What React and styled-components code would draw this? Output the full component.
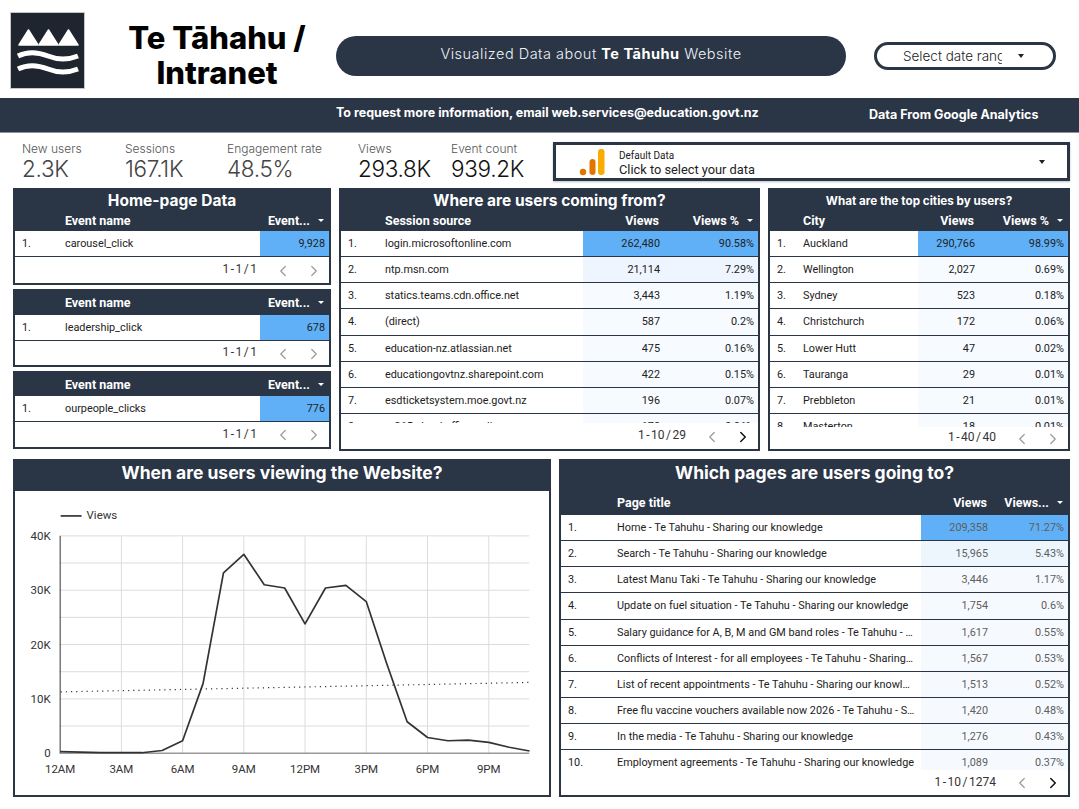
import React from "react";
import styled, { createGlobalStyle } from "styled-components";
import { ChevronLeft, ChevronRight } from "lucide-react";

const DARK = "#2a3546";
const BLUE = "#5fb0f6";
const HEAD_FONT = `Inter, "Open Sans", sans-serif`;

const GlobalStyle = createGlobalStyle`
    body {
        margin: 0;
        background: #fff;
        font-family: Roboto, "Liberation Sans", sans-serif;
        color: #222;
    }
    * { box-sizing: border-box; }
`;

// hourly views in thousands, 12AM to 11PM
const HOURLY = [0.3, 0.2, 0.1, 0.1, 0.1, 0.5, 2.3, 12.8, 33.2, 36.6, 31, 30.4, 23.8, 30.4, 30.9, 27.9, 16.5, 5.8, 2.9, 2.3, 2.4, 2, 1.1, 0.4];

const sources = [
    ["login.microsoftonline.com", "262,480", "90.58%", BLUE],
    ["ntp.msn.com", "21,114", "7.29%", "#eef5fe"],
    ["statics.teams.cdn.office.net", "3,443", "1.19%", "#f7fbff"],
    ["(direct)", "587", "0.2%", "#f7fbff"],
    ["education-nz.atlassian.net", "475", "0.16%", "#f7fbff"],
    ["educationgovtnz.sharepoint.com", "422", "0.15%", "#f7fbff"],
    ["esdticketsystem.moe.govt.nz", "196", "0.07%", "#f7fbff"],
    ["m365.cloud.office.online", "178", "0.06%", "#f7fbff"],
];

const cities = [
    ["Auckland", "290,766", "98.99%", BLUE],
    ["Wellington", "2,027", "0.69%", "#f7fbff"],
    ["Sydney", "523", "0.18%", "#f7fbff"],
    ["Christchurch", "172", "0.06%", "#f7fbff"],
    ["Lower Hutt", "47", "0.02%", "#f7fbff"],
    ["Tauranga", "29", "0.01%", "#f7fbff"],
    ["Prebbleton", "21", "0.01%", "#f7fbff"],
    ["Masterton", "18", "0.01%", "#f7fbff"],
];

const pages = [
    ["Home - Te Tahuhu - Sharing our knowledge", "209,358", "71.27%", BLUE],
    ["Search - Te Tahuhu - Sharing our knowledge", "15,965", "5.43%", "#edf6fd"],
    ["Latest Manu Taki - Te Tahuhu - Sharing our knowledge", "3,446", "1.17%", "#f6faff"],
    ["Update on fuel situation - Te Tahuhu - Sharing our knowledge", "1,754", "0.6%", "#f6faff"],
    ["Salary guidance for A, B, M and GM band roles - Te Tahuhu - Sharing our knowledge", "1,617", "0.55%", "#f6faff"],
    ["Conflicts of Interest - for all employees - Te Tahuhu - Sharing our knowledge", "1,567", "0.53%", "#f6faff"],
    ["List of recent appointments - Te Tahuhu - Sharing our knowledge", "1,513", "0.52%", "#f6faff"],
    ["Free flu vaccine vouchers available now 2026 - Te Tahuhu - Sharing our knowledge", "1,420", "0.48%", "#f6faff"],
    ["In the media - Te Tahuhu - Sharing our knowledge", "1,276", "0.43%", "#f6faff"],
    ["Employment agreements - Te Tahuhu - Sharing our knowledge", "1,089", "0.37%", "#f6faff"],
];

function Logo() {
    return (
        <svg width="75" height="77" viewBox="0 0 75 77">
            <rect x="0.5" y="0.5" width="74" height="76" fill="#1f252e" stroke="#c4c6c8" />
            <g fill="#fff" stroke="#fff" strokeWidth="1.5" strokeLinejoin="round">
                <path d="M9 33 L18.5 18 L28 33 Z" />
                <path d="M29 33 L38.5 18 L48 33 Z" />
                <path d="M49 33 L58.5 18 L68 33 Z" />
            </g>
            <g fill="none" stroke="#fff" strokeWidth="5">
                <path d="M8 44 C18 39 28 40 38 44 C48 48 58 48 68 44" />
                <path d="M8 57 C18 52 28 53 38 57 C48 61 58 61 68 57" />
            </g>
        </svg>
    );
}

function AnalyticsIcon() {
    return (
        <svg width="26" height="28" viewBox="0 0 26 28">
            <circle cx="4" cy="24" r="3.2" fill="#e37400" />
            <rect x="10.5" y="11" width="6" height="16" rx="3" fill="#e37400" />
            <rect x="19" y="1" width="6.5" height="26" rx="3" fill="#f9ab00" />
        </svg>
    );
}

function DataTable({ title, titleSize, titleHeight, titleLine, colsHeight = 19, columns, grid, rows, visible, pager, pagerNext, dim, height, plain }) {
    return (
        <Card $height={height}>
            {title && <CardTitle $size={titleSize} $h={titleHeight} $line={titleLine}>{title}</CardTitle>}
            <ColumnRow $grid={grid} $h={colsHeight}>
                <span />
                <span>{columns[0]}</span>
                {columns.slice(1).map((col, i) => (
                    <ColumnNum key={col}>
                        {col}
                        {i === columns.length - 2 && <SortArrow />}
                    </ColumnNum>
                ))}
            </ColumnRow>
            <RowClip $h={visible}>
                {rows.map((row, i) => (
                    <Row key={row[0]} $grid={grid}>
                        <span>{i + 1}.</span>
                        <Name>{row[0]}</Name>
                        {plain ? (
                            <NumCell style={{ background: row[row.length - 1] }}>{row[1]}</NumCell>
                        ) : (
                            <>
                                <NumCell $dim={dim} style={{ background: row[3] }}>{row[1]}</NumCell>
                                <NumCell $dim={dim} style={{ background: row[3] }}>{row[2]}</NumCell>
                            </>
                        )}
                    </Row>
                ))}
            </RowClip>
            <Pager>
                <PagerText>{pager}</PagerText>
                <PagerBtn>
                    <ChevronLeft size={18} color="#9a9a9a" strokeWidth={1.6} />
                </PagerBtn>
                <PagerBtn>
                    <ChevronRight size={18} color={pagerNext ? "#111" : "#9a9a9a"} strokeWidth={pagerNext ? 2 : 1.6} />
                </PagerBtn>
            </Pager>
        </Card>
    );
}

function ViewsChart() {
    const x = (h) => 59.5 + h * 20.47;
    const y = (k) => 753 - k * 5.45;
    const line = HOURLY.map((k, h) => `${x(h).toFixed(1)},${y(k).toFixed(1)}`).join(" ");
    return (
        <svg width="534" height="305" viewBox="15 490 534 305">
            {[5, 10, 15, 20, 25, 30, 35, 40].map((k) => (
                <line key={k} x1="59" x2="530" y1={y(k)} y2={y(k)} stroke="#dcdcdc" />
            ))}
            {[3, 6, 9, 12, 15, 18, 21].map((h) => (
                <line key={h} x1={x(h)} x2={x(h)} y1="535" y2="753" stroke="#dcdcdc" />
            ))}
            <line x1="59.5" x2="59.5" y1="535" y2="753" stroke="#333" />
            <line x1="59" x2="530" y1="753" y2="753" stroke="#999" strokeWidth="1.5" />
            <line x1="60" x2="530" y1="691.5" y2="682" stroke="#333" strokeWidth="1.2" strokeDasharray="1.2 4" />
            <polyline points={line} fill="none" stroke="#333" strokeWidth="1.7" strokeLinejoin="round" />
            <line x1="60" x2="81" y1="515" y2="515" stroke="#333" strokeWidth="1.7" />
            <ChartText x="86" y="518.5">Views</ChartText>
            {[0, 10, 20, 30, 40].map((k) => (
                <ChartText key={k} x="50" y={y(k) + 4} textAnchor="end">{k === 0 ? "0" : `${k}K`}</ChartText>
            ))}
            {["12AM", "3AM", "6AM", "9AM", "12PM", "3PM", "6PM", "9PM"].map((label, i) => (
                <ChartText key={label} x={x(i * 3)} y="773" textAnchor="middle">{label}</ChartText>
            ))}
        </svg>
    );
}

export default function App() {
    return (
        <Page>
            <GlobalStyle />
            <TopBar>
                <LogoWrap><Logo /></LogoWrap>
                <PageTitle>Te Tāhahu /<br />Intranet</PageTitle>
                <Pill>
                    <span>Visualized Data about <b>Te Tāhuhu</b> Website</span>
                </Pill>
                <DateSelect>
                    <DateText>Select date range</DateText>
                    <DropArrow />
                </DateSelect>
            </TopBar>

            <Banner>
                <BannerText>To request more information, email web.services@education.govt.nz</BannerText>
                <BannerSource>Data From Google Analytics</BannerSource>
            </Banner>

            <KpiRow>
                <Kpi label="New users" value="2.3K" />
                <Kpi label="Sessions" value="167.1K" />
                <Kpi label="Engagement rate" value="48.5%" />
                <Kpi label="Views" value="293.8K" strong />
                <Kpi label="Event count" value="939.2K" strong />
                <DataPicker>
                    <AnalyticsIcon />
                    <PickerText>
                        <small>Default Data</small>
                        <span>Click to select your data</span>
                    </PickerText>
                    <DropArrow />
                </DataPicker>
            </KpiRow>

            <TableGrid>
                <LeftStack>
                    <DataTable
                        title="Home-page Data"
                        titleSize={15.5}
                        titleHeight={22}
                        plain
                        columns={["Event name", "Event..."]}
                        grid="50px 195px 69px"
                        rows={[["carousel_click", "9,928", BLUE]]}
                        visible={26}
                        pager="1 - 1 / 1"
                        height={97}
                    />
                    <DataTable
                        plain
                        colsHeight={24}
                        columns={["Event name", "Event..."]}
                        grid="50px 195px 69px"
                        rows={[["leadership_click", "678", BLUE]]}
                        visible={26}
                        pager="1 - 1 / 1"
                        height={78}
                    />
                    <DataTable
                        plain
                        colsHeight={23}
                        columns={["Event name", "Event..."]}
                        grid="50px 195px 69px"
                        rows={[["ourpeople_clicks", "776", BLUE]]}
                        visible={26}
                        pager="1 - 1 / 1"
                        height={78}
                    />
                </LeftStack>
                <DataTable
                    title="Where are users coming from?"
                    titleSize={15.5}
                    titleHeight={22}
                    columns={["Session source", "Views", "Views %"]}
                    grid="44px 198px 81px 94px"
                    rows={sources}
                    visible={192}
                    pager="1 - 10 / 29"
                    pagerNext
                    height={263}
                />
                <DataTable
                    title="What are the top cities by users?"
                    titleSize={11.7}
                    titleHeight={22}
                    columns={["City", "Views", "Views %"]}
                    grid="33px 115px 61px 89px"
                    rows={cities}
                    visible={196}
                    pager="1 - 40 / 40"
                    height={263}
                />
            </TableGrid>

            <BottomGrid>
                <Card $height={338}>
                    <ChartTitle>When are users viewing the Website?</ChartTitle>
                    <ViewsChart />
                </Card>
                <DataTable
                    title="Which pages are users going to?"
                    titleSize={17.5}
                    titleHeight={32}
                    titleLine={24}
                    colsHeight={22}
                    columns={["Page title", "Views", "Views..."]}
                    grid="56px 304px 71px 76px"
                    rows={pages}
                    visible={255}
                    pager="1 - 10 / 1274"
                    pagerNext
                    dim
                    height={338}
                />
            </BottomGrid>
        </Page>
    );
}

function Kpi({ label, value, strong }) {
    return (
        <KpiBox>
            <KpiLabel>{label}</KpiLabel>
            <KpiValue $strong={strong}>{value}</KpiValue>
        </KpiBox>
    );
}

const Page = styled.div`
    width: 1079px;
    height: 809px;
    overflow: hidden;
    background: #fff;
`;

const TopBar = styled.div`
    display: flex;
    align-items: center;
    height: 98px;
    padding: 14px 0 0 10px;
`;

const LogoWrap = styled.div`
    display: flex;
    align-self: flex-start;
    width: 75px;
    height: 77px;
    margin-top: -2px;
`;

const PageTitle = styled.div`
    width: 238px;
    margin-left: 13px;
    padding-bottom: 2px;
    text-align: center;
    font-family: ${HEAD_FONT};
    font-weight: 800;
    font-size: 31px;
    line-height: 35px;
    color: #000;
`;

const Pill = styled.div`
    display: flex;
    align-items: center;
    justify-content: center;
    width: 510px;
    height: 40px;
    padding-bottom: 5px;
    border-radius: 20px;
    background: ${DARK};
    color: #eef0f3;
    font-family: ${HEAD_FONT};
    font-size: 14.5px;
    font-weight: 300;
    letter-spacing: 0.5px;
    b { font-weight: 700; color: #fff; }
`;

const DateSelect = styled.div`
    display: flex;
    align-items: center;
    width: 182px;
    height: 28px;
    margin-left: 28px;
    padding-left: 26px;
    border: 3px solid ${DARK};
    border-radius: 14px;
    font-family: ${HEAD_FONT};
    font-size: 13.5px;
    font-weight: 300;
`;

const DateText = styled.span`
    display: block;
    width: 99px;
    overflow: hidden;
    white-space: nowrap;
    margin-right: 16px;
`;

const DropArrow = styled.span`
    display: block;
    width: 0;
    height: 0;
    border-left: 3.5px solid transparent;
    border-right: 3.5px solid transparent;
    border-top: 4px solid #222;
`;

const SortArrow = styled.span`
    display: block;
    width: 0;
    height: 0;
    margin-left: 8px;
    border-left: 3.5px solid transparent;
    border-right: 3.5px solid transparent;
    border-top: 3.5px solid #fff;
`;

const Banner = styled.div`
    display: flex;
    height: 35px;
    padding-left: 336px;
    background: ${DARK};
    border-bottom: 1px solid #8a93a0;
    color: #fff;
    font-family: ${HEAD_FONT};
    font-size: 12.5px;
    font-weight: 700;
`;

const BannerText = styled.div`
    width: 533px;
    padding-top: 7px;
    white-space: nowrap;
`;

const BannerSource = styled.div`
    padding-top: 9px;
    white-space: nowrap;
`;

const KpiRow = styled.div`
    display: grid;
    grid-template-columns: 103px 102px 131px 93px 102px 517px;
    height: 55px;
    padding-left: 22px;
`;

const KpiBox = styled.div`
    padding-top: 9px;
    font-family: ${HEAD_FONT};
`;

const KpiLabel = styled.div`
    font-size: 12px;
    font-weight: 300;
    line-height: 14px;
    color: #555;
    white-space: nowrap;
`;

const KpiValue = styled.div`
    font-size: 22.5px;
    font-weight: 300;
    line-height: 26px;
    color: ${(p) => (p.$strong ? "#111" : "#444")};
    letter-spacing: -0.3px;
`;

const DataPicker = styled.div`
    display: flex;
    align-items: center;
    width: 517px;
    height: 39px;
    margin-top: 9px;
    padding: 0 22px 0 23px;
    border: 3px solid ${DARK};
    box-shadow: 0 1px 2px rgba(0, 0, 0, 0.25);
`;

const PickerText = styled.div`
    display: flex;
    flex-direction: column;
    flex: 1;
    margin-left: 14px;
    padding-top: 2px;
    font-size: 12.8px;
    line-height: 15px;
    small { font-size: 10px; line-height: 13px; }
`;

const TableGrid = styled.div`
    display: grid;
    grid-template-columns: 318px 421px 302px;
    gap: 8px;
    padding-left: 13px;
`;

const LeftStack = styled.div`
    display: flex;
    flex-direction: column;
    gap: 4px;
`;

const BottomGrid = styled.div`
    display: grid;
    grid-template-columns: 538px 511px;
    gap: 8px;
    padding: 8px 0 0 13px;
`;

const Card = styled.div`
    display: flex;
    flex-direction: column;
    height: ${(p) => p.$height}px;
    border: 2px solid ${DARK};
    background: #fff;
    overflow: hidden;
`;

const CardTitle = styled.div`
    height: ${(p) => p.$h}px;
    line-height: ${(p) => p.$line || p.$h}px;
    flex-shrink: 0;
    background: ${DARK};
    color: #fff;
    text-align: center;
    font-family: ${HEAD_FONT};
    font-weight: 700;
    font-size: ${(p) => p.$size}px;
`;

const ChartTitle = styled.div`
    height: 30px;
    line-height: 24px;
    background: ${DARK};
    color: #fff;
    text-align: center;
    font-family: ${HEAD_FONT};
    font-weight: 700;
    font-size: 17.5px;
`;

const ColumnRow = styled.div`
    display: grid;
    grid-template-columns: ${(p) => p.$grid};
    align-items: center;
    flex-shrink: 0;
    height: ${(p) => p.$h}px;
    padding-bottom: ${(p) => (p.$h >= 23 ? 1 : 3)}px;
    background: ${DARK};
    color: #fff;
    font-size: 12.5px;
    font-weight: 700;
`;

const ColumnNum = styled.div`
    display: flex;
    align-items: center;
    justify-content: flex-end;
    padding-right: 5px;
    white-space: nowrap;
`;

const RowClip = styled.div`
    height: ${(p) => p.$h}px;
    flex-shrink: 0;
    overflow: hidden;
`;

const Row = styled.div`
    display: grid;
    grid-template-columns: ${(p) => p.$grid};
    height: 26.15px;
    align-items: stretch;
    line-height: 25px;
    font-size: 10.85px;
    color: #222;
    border-bottom: 1px solid ${DARK};
    span { padding-left: 7px; }
`;

const Name = styled.div`
    padding-right: 6px;
    overflow: hidden;
    white-space: nowrap;
    text-overflow: ellipsis;
`;

const NumCell = styled.div`
    padding-right: 4px;
    text-align: right;
    color: ${(p) => (p.$dim ? "#5e5e5e" : "#222")};
`;

const Pager = styled.div`
    display: flex;
    align-items: center;
    justify-content: flex-end;
    flex: 1;
`;

const PagerText = styled.div`
    margin: 0 10px 2px 0;
    font-size: 12px;
    word-spacing: -1.5px;
    color: #333;
    white-space: nowrap;
`;

const PagerBtn = styled.div`
    display: flex;
    justify-content: center;
    width: 31px;
    padding-top: 1px;
`;

const ChartText = styled.text`
    font-family: Roboto, "Liberation Sans", sans-serif;
    font-size: 11.5px;
    fill: #333;
`;
